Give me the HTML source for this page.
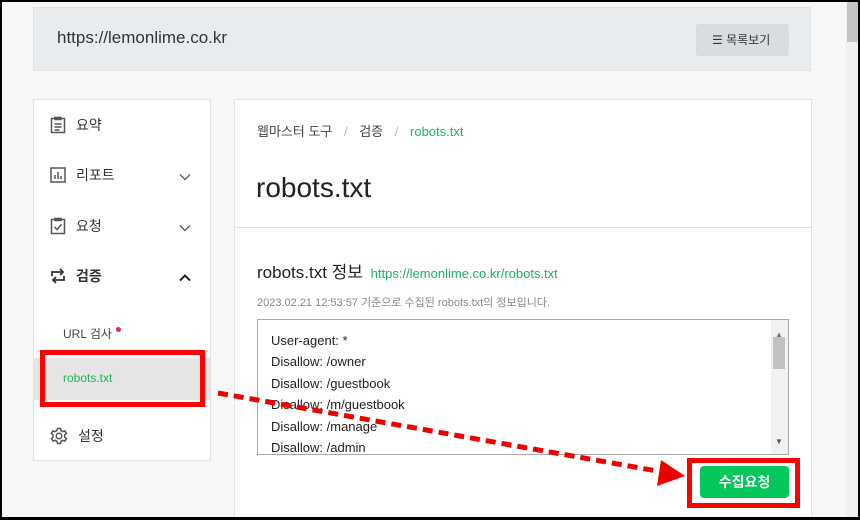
<!DOCTYPE html>
<html><head><meta charset="utf-8"><style>
*{margin:0;padding:0;box-sizing:border-box}
body{width:860px;height:520px;overflow:hidden;background:#000;font-family:"Liberation Sans","Noto Sans CJK KR",sans-serif;position:relative}
#pg{position:absolute;left:2px;top:2px;width:856px;height:515px;background:#f7f7f7;overflow:hidden}
.abs{position:absolute}
.hdr{left:31px;top:5px;width:778px;height:64px;background:#e9ecef;border:1px solid #e0e3e6}
.hdr .u{position:absolute;left:23px;top:20px;font-size:17px;color:#333}
.btn1{position:absolute;right:21px;top:16px;width:93px;height:32px;background:#d9dde0;border-radius:3px;font-size:12px;color:#333;line-height:32px;padding-left:16px}
.side{left:31px;top:97px;width:178px;height:362px;background:#fff;border:1px solid #e3e3e3}
.item{position:absolute;left:16px;font-size:14px;color:#333;display:flex;align-items:center}
.item svg{margin-right:10px}
.chev{position:absolute;left:145px}
.main{left:232px;top:97px;width:578px;height:430px;background:#fff;border:1px solid #e3e3e3}
.ta{left:22px;top:219px;width:532px;height:136px;border:1px solid #a9a9a9;overflow:hidden;font-size:13px;color:#222;line-height:21.4px;padding:10px 0 0 13px}
.sb{position:absolute;right:0;top:0;width:17px;height:100%;background:#f1f1f1}
</style></head><body><div id="pg">
<div class="abs hdr"><div class="u">https://lemonlime.co.kr</div>
<div class="btn1"><span style="font-size:12px">☰</span> 목록보기</div></div>
<div class="abs" style="left:844px;top:0;width:12px;height:515px;background:#f0f0f0"></div>
<div class="abs" style="left:845px;top:0;width:11px;height:40px;background:#c4c4c4"></div>

<div class="abs side">
<div class="item" style="top:15px"><svg width="16" height="18" viewBox="0 0 16 18" fill="none" stroke="#555" stroke-width="1.5"><rect x="1.5" y="2.5" width="13" height="14"/><path d="M5 1.5h6v2H5zM4.5 8h7M4.5 11h7M4.5 14h5"/></svg>요약</div>
<div class="item" style="top:65px"><svg width="16" height="16" viewBox="0 0 16 16" fill="none" stroke="#555" stroke-width="1.5"><rect x="1" y="1" width="14" height="14"/><path d="M5 12V8M8 12V5M11 12V9"/></svg>리포트</div>
<svg class="chev" style="top:73px" width="12" height="8" viewBox="0 0 12 8" fill="none" stroke="#666" stroke-width="1.5"><path d="M1 1.5l5 5 5-5"/></svg>
<div class="item" style="top:116px"><svg width="16" height="18" viewBox="0 0 16 18" fill="none" stroke="#555" stroke-width="1.5"><rect x="1.5" y="2.5" width="13" height="14"/><path d="M5 1.5h6v2H5zM4.5 10l2.5 2.5 4.5-5"/></svg>요청</div>
<svg class="chev" style="top:124px" width="12" height="8" viewBox="0 0 12 8" fill="none" stroke="#666" stroke-width="1.5"><path d="M1 1.5l5 5 5-5"/></svg>
<div class="item" style="top:166px;font-weight:bold"><svg width="16" height="16" viewBox="0 0 16 16" fill="none" stroke="#333" stroke-width="1.8"><path d="M2 8V4h11M10 1l3 3-3 3M14 8v4H3M6 9l-3 3 3 3"/></svg>검증</div>
<svg class="chev" style="top:174px" width="12" height="8" viewBox="0 0 12 8" fill="none" stroke="#222" stroke-width="2"><path d="M1 6.5l5-5 5 5"/></svg>
<div class="item" style="top:225px;left:29px;font-size:12px;color:#444">URL 검사<span style="display:inline-block;width:5px;height:5px;border-radius:50%;background:#e0334f;margin-left:4px;margin-top:-8px"></span></div>
<div class="abs" style="left:0;top:258px;width:176px;height:42px;background:#e5e5e5"></div>
<div class="item" style="top:271px;left:29px;font-size:12px;color:#1db45a">robots.txt</div>
<div class="item" style="top:326px"><svg width="18" height="18" viewBox="0 0 18 18" fill="none" stroke="#555" stroke-width="1.5"><circle cx="9" cy="9" r="2.8"/><path d="M7.5 1.5h3l.5 2.2 1.8 1 2.1-.8 1.5 2.6-1.7 1.5v2l1.7 1.5-1.5 2.6-2.1-.8-1.8 1-.5 2.2h-3l-.5-2.2-1.8-1-2.1.8-1.5-2.6L3 10V8L1.300 6.5l1.5-2.6 2.1.8 1.8-1z"/></svg>설정</div>
</div>
<div class="abs" style="left:38px;top:348px;width:165px;height:57px;border:5px solid #f00"></div>

<div class="abs main">
<div class="abs" style="left:22px;top:21px;font-size:13px;color:#444">웹마스터 도구 <span style="color:#bbb;margin:0 8px">/</span> 검증 <span style="color:#bbb;margin:0 8px">/</span> <span style="color:#1db45a">robots.txt</span></div>
<div class="abs" style="left:21px;top:72px;font-size:28px;color:#222">robots.txt</div>
<div class="abs" style="left:0;top:127px;width:576px;height:1px;background:#e3e3e3"></div>
<div class="abs" style="left:22px;top:158px;font-size:17px;color:#222">robots.txt 정보 <span style="font-size:13px;color:#1db45a;margin-left:3px">https://lemonlime.co.kr/robots.txt</span></div>
<div class="abs" style="left:22px;top:194px;font-size:11px;color:#888">2023.02.21 12:53:57 기준으로 수집된 robots.txt의 정보입니다.</div>
<div class="abs ta">User-agent: *<br>Disallow: /owner<br>Disallow: /guestbook<br>Disallow: /m/guestbook<br>Disallow: /manage<br>Disallow: /admin
<div class="sb"><div style="position:absolute;left:2px;top:17px;width:12px;height:32px;background:#c1c1c1"></div>
<div style="position:absolute;left:4px;top:4px;font-size:8px;color:#777">▲</div><div style="position:absolute;left:4px;bottom:2px;font-size:8px;color:#555">▼</div></div></div>
<div class="abs" style="left:465px;top:366px;width:89px;height:32px;background:#03c75a;border-radius:4px;color:#fff;font-size:14px;font-weight:bold;text-align:center;line-height:32px">수집요청</div>
</div>
<div class="abs" style="left:685px;top:456px;width:113px;height:50px;border:5px solid #f00"></div>

<svg class="abs" style="left:0;top:0" width="856" height="515"><line x1="216" y1="391" x2="655" y2="469" stroke="#e00" stroke-width="5" stroke-dasharray="10,6"/><path d="M659 458L683 474 655 484z" fill="#e00"/></svg>
</div></body></html>
